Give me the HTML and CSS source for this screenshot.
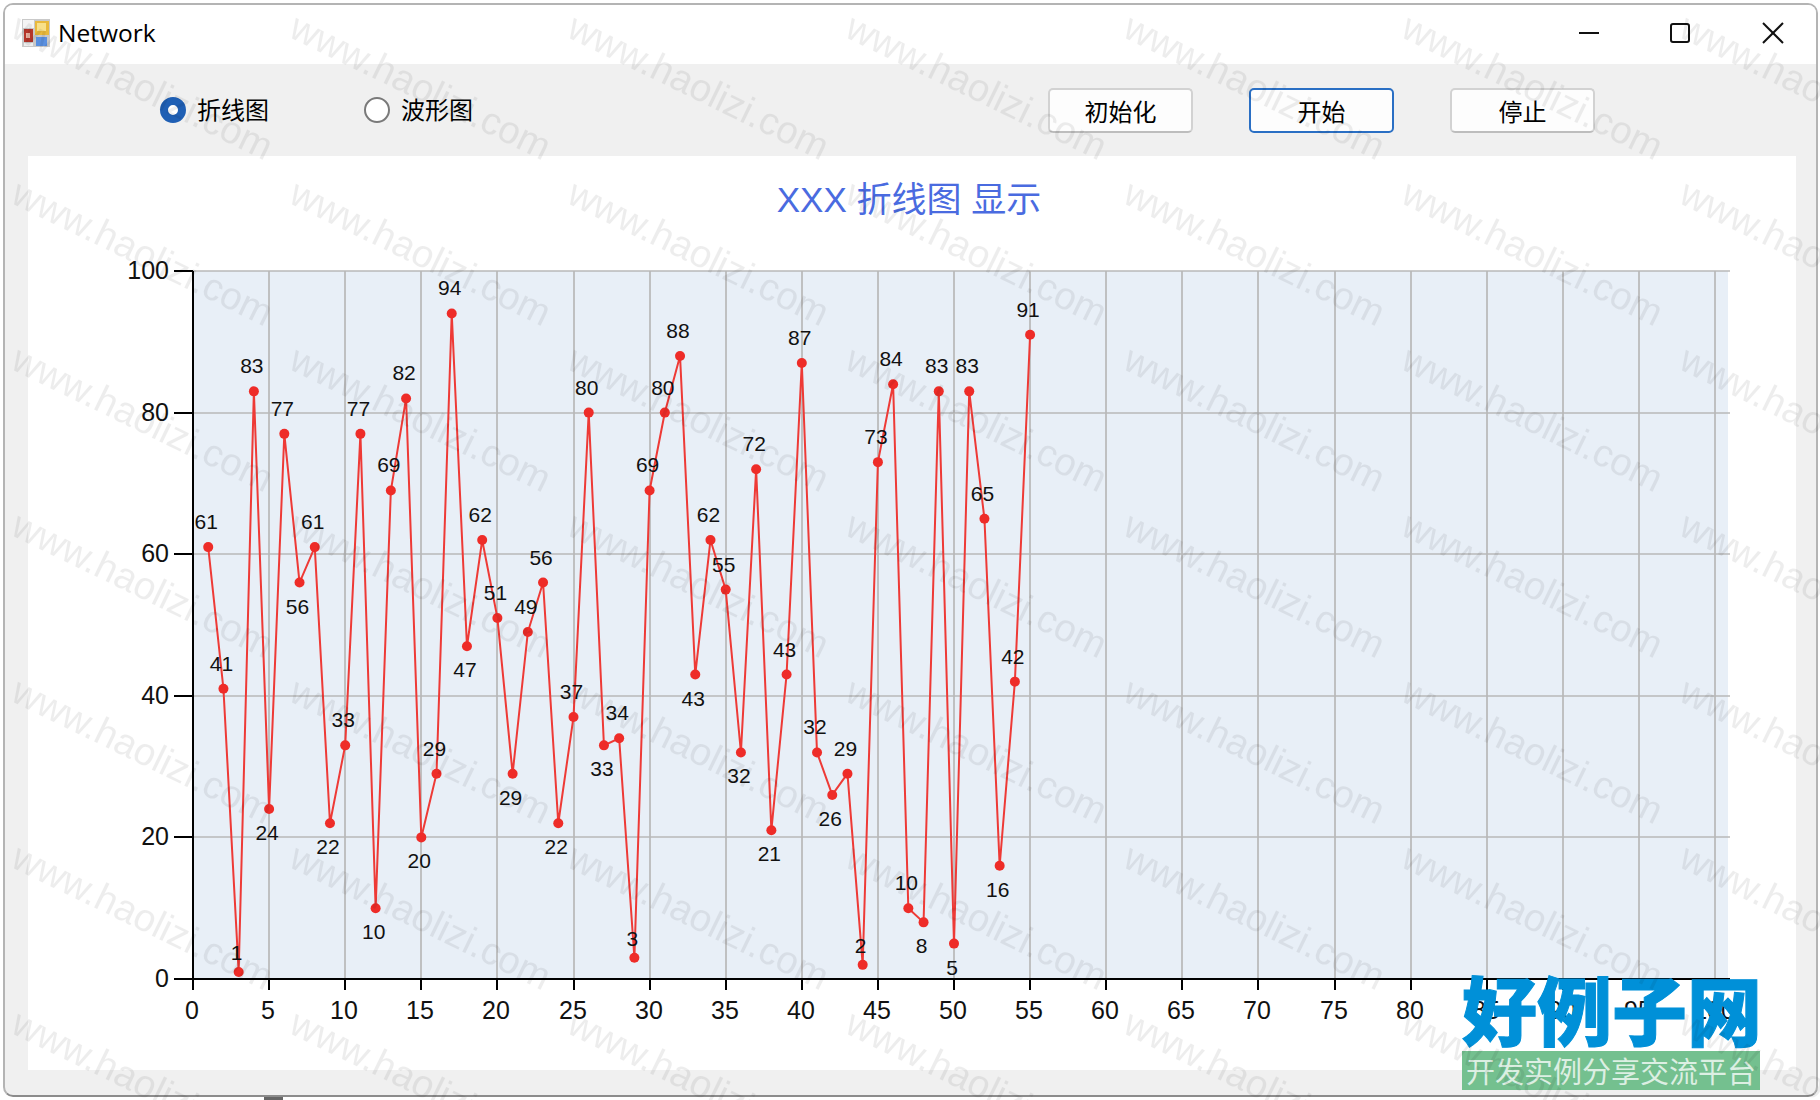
FILE: index.html
```html
<!DOCTYPE html>
<html lang="en">

<head>
    <meta charset="UTF-8">
    <title>Network</title>
    <link rel="stylesheet" href="styles.css">
</head>

<body>
    <div class="window">
        <div class="titlebar">
            <svg class="app-icon" viewBox="0 0 28 28">
                <rect x="0" y="0" width="28" height="28" fill="#c9c9c9" />
                <rect x="1" y="1" width="11" height="8" fill="#f4f4f4" />
                <rect x="2" y="10" width="9" height="13" fill="#b5352a" />
                <rect x="4" y="14" width="4" height="5" fill="#e8b0a0" />
                <rect x="13" y="2" width="14" height="14" fill="#e9b93c" />
                <rect x="15" y="4" width="9" height="8" fill="#f8e08a" />
                <rect x="14" y="18" width="11" height="9" fill="#5a90e0" />
                <rect x="2" y="24" width="9" height="3" fill="#eeeeee" />
            </svg>
            <span class="title-text">Network</span>
            <div class="win-controls">
                <svg class="win-btn" viewBox="0 0 20 20">
                    <line x1="0" y1="10" x2="20" y2="10" />
                </svg>
                <svg class="win-btn" viewBox="0 0 20 20">
                    <rect x="1" y="1" width="18" height="18" rx="2" />
                </svg>
                <svg class="win-btn close" viewBox="0 0 20 20">
                    <line x1="0" y1="0" x2="20" y2="20" />
                    <line x1="20" y1="0" x2="0" y2="20" />
                </svg>
            </div>
        </div>

        <div class="toolbar">
            <label class="radio"><span class="dot checked"></span>折线图</label>
            <label class="radio"><span class="dot"></span>波形图</label>
            <div class="buttons">
                <button>初始化</button>
                <button class="focus">开始</button>
                <button>停止</button>
            </div>
        </div>

        <div class="panel">
            <svg id="chart" class="chart" viewBox="28 156 1768 914"></svg>
        </div>
    </div>

    <div class="logo">
        <div class="logo-name">好例子网</div>
        <div class="logo-sub">开发实例分享交流平台</div>
    </div>

    <div class="taskbar-bit"></div>

    <svg class="watermark" width="1820" height="1100">
        <defs>
            <pattern id="wm" patternUnits="userSpaceOnUse" x="4" y="10" width="278" height="166">
                <text transform="translate(5 26) rotate(26)">www.haolizi.com</text>
            </pattern>
        </defs>
        <rect width="1820" height="1100" fill="url(#wm)" />
    </svg>

    <script src="chart.js"></script>
</body>

</html>
```

FILE: styles.css
```css
* {
    margin: 0;
    padding: 0;
    box-sizing: border-box;
}

body {
    width: 1820px;
    height: 1100px;
    padding: 3px 2px 3px 3px;
    background: #fff;
    overflow: hidden;
    font-family: "Noto Sans CJK SC", sans-serif;
}

.window {
    display: flex;
    flex-direction: column;
    height: 100%;
    border: 2px solid #b4b4b4;
    border-bottom-color: #8c8c8c;
    border-radius: 10px;
    background: #f0f0f0;
    overflow: hidden;
}

.titlebar {
    display: flex;
    flex-shrink: 0;
    align-items: center;
    height: 59px;
    padding: 0 0 4px 17px;
    background: #fff;
}

.app-icon {
    width: 28px;
    height: 28px;
}

.title-text {
    margin-left: 8px;
    font: 24.5px "Open Sans", sans-serif;
    color: #000;
}

.win-controls {
    display: flex;
    gap: 71px;
    margin-left: auto;
    padding-right: 33px;
}

.win-btn {
    width: 20px;
    height: 20px;
    overflow: visible;
}

.win-btn.close {
    margin-left: 2px;
}

.win-btn line,
.win-btn rect {
    fill: none;
    stroke: #111;
    stroke-width: 2;
}

.toolbar {
    display: flex;
    flex-shrink: 0;
    align-items: center;
    height: 92px;
    padding-left: 155px;
}

.radio {
    display: flex;
    align-items: center;
    gap: 11px;
    margin-right: 95px;
    padding-bottom: 4px;
    font-size: 24px;
    color: #000;
}

.dot {
    width: 26px;
    height: 26px;
    margin-top: 4px;
    border: 2px solid #7a7a7a;
    border-radius: 50%;
    background: #fff;
}

.dot.checked {
    border: 8px solid #1f5fb4;
}

.buttons {
    display: flex;
    gap: 56px;
    margin-left: 480px;
}

.buttons button {
    width: 145px;
    height: 45px;
    border: 2px solid #d2d2d2;
    border-bottom-color: #bdbdbd;
    border-radius: 5px;
    background: #fdfdfd;
    font: 24px "Noto Sans CJK SC", sans-serif;
    color: #000;
}

.buttons .focus {
    border-color: #2a6fc4;
}

.panel {
    flex: 1;
    min-height: 0;
    margin: 0 20px 25px 23px;
    background: #fff;
}

.chart {
    display: block;
    width: 100%;
    height: 100%;
}

.chart-title {
    font: 35px "Liberation Sans", "Noto Sans CJK SC", sans-serif;
    fill: #4a6be0;
    text-anchor: middle;
}

.plot-bg {
    fill: #e8eff7;
}

.grid {
    stroke: #b8b8b8;
    stroke-width: 1.7;
}

.axis {
    stroke: #000;
    stroke-width: 2;
}

.axis-label {
    font: 25px "Liberation Sans", sans-serif;
    fill: #111;
}

.point-label {
    font: 21px "Liberation Sans", sans-serif;
    fill: #111;
    text-anchor: middle;
}

.series {
    fill: none;
    stroke: #ee3a36;
    stroke-width: 2;
}

.marker {
    fill: #ee2c28;
}

.logo {
    position: absolute;
    left: 1462px;
    top: 966px;
    width: 298px;
}

.logo-name {
    height: 85px;
    font-size: 75px;
    font-weight: 900;
    line-height: 83px;
    white-space: nowrap;
    color: #0090d8;
    -webkit-text-stroke: 1px #0090d8;
}

.logo-sub {
    height: 39px;
    background: #74c08f;
    font-size: 29px;
    line-height: 39px;
    text-align: center;
    white-space: nowrap;
    color: rgba(255, 255, 255, 0.75);
}

.taskbar-bit {
    position: absolute;
    left: 264px;
    top: 1097px;
    width: 19px;
    height: 3px;
    background: #666;
}

.watermark {
    position: absolute;
    left: 0;
    top: 0;
    pointer-events: none;
}

.watermark text {
    font: 38.5px "Liberation Sans", sans-serif;
    fill: rgba(0, 0, 0, 0.07);
}
```

FILE: chart.js
```js
// 折线图数据
let data = [61, 41, 1, 83, 24, 77, 56, 61, 22, 33, 77, 10, 69, 82, 20, 29, 94, 47, 62, 51, 29, 49, 56, 22, 37, 80, 33, 34, 3, 69, 80, 88, 43, 62, 55, 32, 72, 21, 43, 87, 32, 26, 29, 2, 73, 84, 10, 8, 83, 5, 83, 65, 16, 42, 91]
// 标签在点下方的序号
let below = [5, 7, 9, 12, 15, 18, 21, 24, 27, 33, 36, 38, 42, 48, 50, 53]

let left = 193
let bottom = 979
let top_y = 271
let right = 1728

function px(n) {
    return left + n * 15.22
}
function py(v) {
    return bottom - v * 7.08
}

let html = `<text class="chart-title" x="909" y="212">XXX 折线图 显示</text>`
html += `<rect class="plot-bg" x="${left}" y="${top_y}" width="${right - left}" height="${bottom - top_y}" />`

// 网格 + 刻度
for (let v = 0; v <= 100; v += 20) {
    let y = Math.round(py(v))
    if (v > 0) {
        html += `<line class="grid" x1="${left}" y1="${y}" x2="1730" y2="${y}" />`
    }
    html += `<line class="axis" x1="174" y1="${y}" x2="${left}" y2="${y}" />`
    html += `<text class="axis-label" x="169" y="${y + 8}" text-anchor="end">${v}</text>`
}
for (let n = 0; n <= 100; n += 5) {
    let x = Math.round(px(n))
    if (n > 0) {
        html += `<line class="grid" x1="${x}" y1="${top_y}" x2="${x}" y2="${bottom}" />`
    }
    html += `<line class="axis" x1="${x}" y1="${bottom}" x2="${x}" y2="990" />`
    html += `<text class="axis-label" x="${x - 1}" y="1019" text-anchor="middle">${n}</text>`
}
html += `<line class="axis" x1="${left}" y1="${top_y}" x2="${left}" y2="${bottom + 1}" />`
html += `<line class="axis" x1="174" y1="${bottom}" x2="1730" y2="${bottom}" />`

// 折线
let points = data.map((v, i) => px(i + 1) + ',' + py(v)).join(' ')
html += `<polyline class="series" points="${points}" />`
data.forEach((v, i) => {
    let x = px(i + 1)
    let y = py(v)
    let ly = y - 18
    if (below.includes(i + 1)) {
        ly = y + 31
    } else if (v <= 3) {
        // 靠近x轴的标签位置会被压低
        ly = y - 12
    }
    html += `<circle class="marker" cx="${x}" cy="${y}" r="5" />`
    html += `<text class="point-label" x="${x - 2}" y="${ly}">${v}</text>`
})

document.querySelector('#chart').innerHTML = html
```
